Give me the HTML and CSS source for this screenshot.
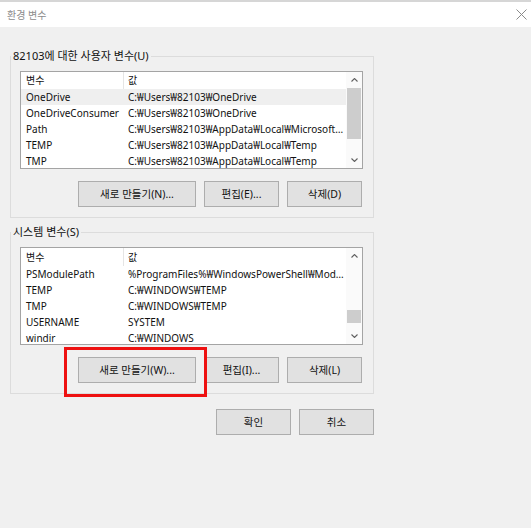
FILE: index.html
```html
<!DOCTYPE html>
<html lang="ko">
<head>
<meta charset="utf-8">
<title>환경 변수</title>
<link rel="stylesheet" href="styles.css">
</head>
<body>
<div class="window">
  <div class="topline"></div>
  <div class="titlebar">
    <span class="title">환경 변수</span>
    <svg class="close" width="11" height="11" viewBox="0 0 11 11"><path d="M0.5 0.5 L10.5 10.5 M10.5 0.5 L0.5 10.5" stroke="#8a8a8a" stroke-width="1" fill="none"/></svg>
  </div>
  <div class="content">
    <section class="group">
      <div class="group-title">82103에 대한 사용자 변수(U)</div>
      <div class="listbox">
        <div class="list-main">
          <div class="row header"><span class="c1">변수</span><span class="c2">값</span></div>
          <div class="row hover"><span class="c1">OneDrive</span><span class="c2">C:₩Users₩82103₩OneDrive</span></div>
          <div class="row"><span class="c1">OneDriveConsumer</span><span class="c2">C:₩Users₩82103₩OneDrive</span></div>
          <div class="row"><span class="c1">Path</span><span class="c2">C:₩Users₩82103₩AppData₩Local₩Microsoft₩WindowsApps;</span></div>
          <div class="row"><span class="c1">TEMP</span><span class="c2">C:₩Users₩82103₩AppData₩Local₩Temp</span></div>
          <div class="row"><span class="c1">TMP</span><span class="c2">C:₩Users₩82103₩AppData₩Local₩Temp</span></div>
        </div>
        <div class="scrollbar">
          <div class="arrow"><svg width="7" height="4" viewBox="0 0 7 4"><path d="M0.5 3.5 L3.5 0.5 L6.5 3.5" stroke="#606060" stroke-width="1.1" fill="none"/></svg></div>
          <div class="track"><div class="thumb" style="margin-top:0;height:51px"></div></div>
          <div class="arrow"><svg width="7" height="4" viewBox="0 0 7 4"><path d="M0.5 0.5 L3.5 3.5 L6.5 0.5" stroke="#606060" stroke-width="1.1" fill="none"/></svg></div>
        </div>
      </div>
      <div class="buttons">
        <button class="btn wide">새로 만들기(N)...</button>
        <button class="btn">편집(E)...</button>
        <button class="btn">삭제(D)</button>
      </div>
    </section>

    <section class="group second">
      <div class="group-title">시스템 변수(S)</div>
      <div class="listbox">
        <div class="list-main">
          <div class="row header tall"><span class="c1">변수</span><span class="c2">값</span></div>
          <div class="row"><span class="c1">PSModulePath</span><span class="c2">%ProgramFiles%₩WindowsPowerShell₩Modules;C:₩WINDOWS</span></div>
          <div class="row"><span class="c1">TEMP</span><span class="c2">C:₩WINDOWS₩TEMP</span></div>
          <div class="row"><span class="c1">TMP</span><span class="c2">C:₩WINDOWS₩TEMP</span></div>
          <div class="row"><span class="c1">USERNAME</span><span class="c2">SYSTEM</span></div>
          <div class="row"><span class="c1">windir</span><span class="c2">C:₩WINDOWS</span></div>
        </div>
        <div class="scrollbar">
          <div class="arrow"><svg width="7" height="4" viewBox="0 0 7 4"><path d="M0.5 3.5 L3.5 0.5 L6.5 3.5" stroke="#606060" stroke-width="1.1" fill="none"/></svg></div>
          <div class="track"><div class="thumb" style="margin-top:46px;height:13px"></div></div>
          <div class="arrow"><svg width="7" height="4" viewBox="0 0 7 4"><path d="M0.5 0.5 L3.5 3.5 L6.5 0.5" stroke="#606060" stroke-width="1.1" fill="none"/></svg></div>
        </div>
      </div>
      <div class="buttons">
        <button class="btn wide marked">새로 만들기(W)...<span class="highlight"></span></button>
        <button class="btn">편집(I)...</button>
        <button class="btn">삭제(L)</button>
      </div>
    </section>

    <div class="dialog-buttons">
      <button class="btn">확인</button>
      <button class="btn">취소</button>
    </div>
  </div>
</div>
</body>
</html>
```

FILE: styles.css
```css
* { box-sizing: border-box; }

html, body {
  margin: 0;
  padding: 0;
  background: #f0f0f0;
}

body {
  font-family: "Noto Sans", "Noto Sans CJK KR", sans-serif;
  font-size: 10px;
  color: #000;
}

.window {
  width: 531px;
  height: 528px;
  background: #f0f0f0;
  overflow: hidden;
}

.topline {
  height: 2px;
  background: #d6d6d6;
}

.titlebar {
  height: 25px;
  background: #fff;
  display: flex;
  align-items: center;
  justify-content: space-between;
  padding: 0 4px 0 7px;
}

.title {
  color: #8c8c8c;
  font-size: 10px;
  line-height: 14px;
}

.close {
  display: block;
}

.content {
  padding: 29px 0 0 10px;
  width: 374px;
}

.group {
  border: 1px solid #dcdcdc;
  padding: 0 10px 10px 9px;
}

.group.second {
  margin-top: 14px;
}

.group-title {
  width: fit-content;
  margin: -8px 0 0 -9px;
  padding: 0 2px;
  height: 14px;
  line-height: 14px;
  font-size: 11px;
  background: #f0f0f0;
  white-space: nowrap;
  color: #111;
}

.listbox {
  margin-top: 8px;
  height: 98px;
  border: 1px solid #a4a4a4;
  background: #fff;
  display: flex;
  overflow: hidden;
}

.list-main {
  flex: 1;
  min-width: 0;
  overflow: hidden;
}

.row {
  display: flex;
  height: 16px;
  line-height: 16px;
  white-space: nowrap;
  color: #111;
}

.row.header {
  height: 17px;
  line-height: 17px;
}

.row.header.tall {
  height: 18px;
  line-height: 18px;
}

.row.hover {
  background: #efefef;
}

.c1 {
  width: 103px;
  flex: none;
  padding-left: 5px;
  overflow: hidden;
}

.header .c1 {
  border-right: 1px solid #e5e5e5;
}

.c2 {
  flex: 1;
  min-width: 0;
  padding-left: 4px;
  padding-right: 1px;
  overflow: hidden;
  text-overflow: ellipsis;
}

.scrollbar {
  width: 16px;
  flex: none;
  background: #fafafa;
  display: flex;
  flex-direction: column;
}

.arrow {
  height: 16px;
  flex: none;
  display: flex;
  align-items: center;
  justify-content: center;
}

.arrow svg {
  display: block;
}

.track {
  flex: 1;
  padding: 0 1px;
}

.thumb {
  background: #cdcdcd;
}

.buttons {
  display: flex;
  justify-content: flex-end;
  gap: 8px;
  margin-top: 12px;
  padding-right: 1px;
}

.btn {
  font: inherit;
  font-size: 10.5px;
  color: #111;
  height: 26px;
  width: 75px;
  padding: 0;
  background: #e1e1e1;
  border: 1px solid #adadad;
  border-radius: 0;
  line-height: 24px;
  white-space: nowrap;
}

.btn.wide {
  width: 118px;
}

.btn.marked {
  position: relative;
}

.highlight {
  position: absolute;
  left: -15px;
  top: -11px;
  right: -12px;
  bottom: -15px;
  border: 3px solid #ee1111;
  pointer-events: none;
}

.dialog-buttons {
  display: flex;
  justify-content: flex-end;
  gap: 8px;
  margin-top: 15px;
}
```
